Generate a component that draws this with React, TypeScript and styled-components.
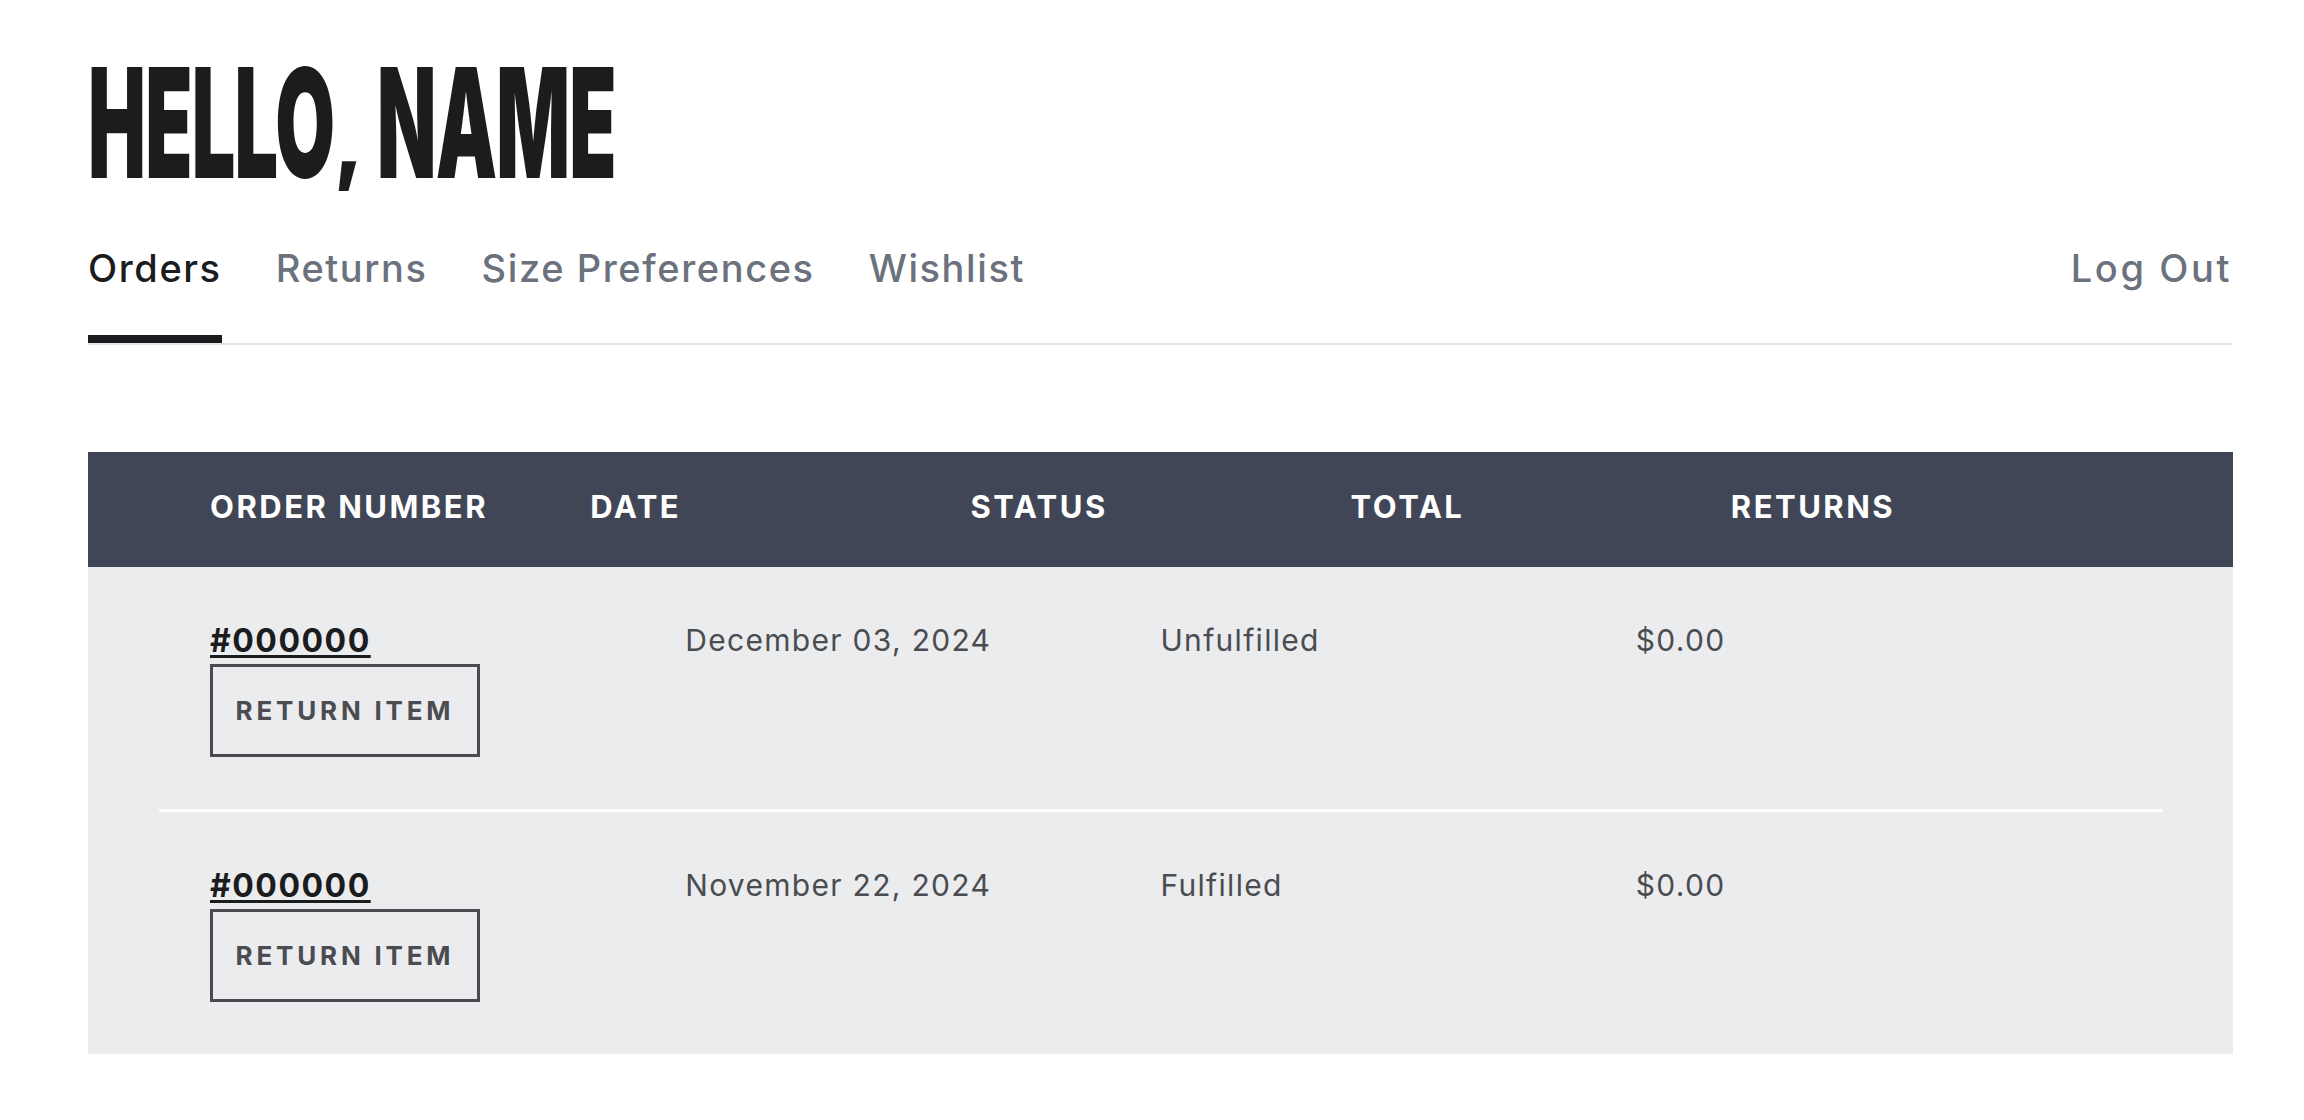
import React from "react";
import styled, { createGlobalStyle } from "styled-components";

const GlobalStyle = createGlobalStyle`
  html, body {
    margin: 0;
    padding: 0;
    background: #ffffff;
  }
  body {
    font-family: "Inter", "Noto Sans", sans-serif;
    color: #1b1c1e;
  }
`;

const Page = styled.div`
  width: 2145px;
  padding-left: 88px;
`;

const Title = styled.h1`
  margin: 0;
  padding-top: 47px;
  font-family: "Inter", "Roboto", sans-serif;
  font-weight: 900;
  font-size: 152px;
  line-height: 152px;
  height: 152px;
  letter-spacing: -0.01em;
  white-space: nowrap;
  color: #1b1c1e;
  transform: scaleX(0.508);
  transform-origin: left center;
`;

// the display face has a short comma, squash ours a bit
const Comma = styled.span`
  display: inline-block;
  transform: scaleY(0.6);
  transform-origin: 50% 76%;
`;

const TabBar = styled.nav`
  display: flex;
  align-items: flex-end;
  gap: 54px;
  margin-top: 47px;
  border-bottom: 2px solid #e3e5e8;
`;

const Tab = styled.a<{ $active?: boolean; $end?: boolean }>`
  font-size: 38px;
  line-height: 1.2;
  font-weight: 500;
  letter-spacing: ${(p) => (p.$end ? "2.6px" : "1.6px")};
  color: ${(p) => (p.$active ? "#1b1c1e" : "#6b727d")};
  padding-bottom: 43px;
  border-bottom: 8px solid ${(p) => (p.$active ? "#1b1c1e" : "transparent")};
  margin-left: ${(p) => (p.$end ? "auto" : "0")};
  padding-right: ${(p) => (p.$end ? "1px" : "0")};
  text-decoration: none;
  cursor: pointer;
`;

const Table = styled.section`
  margin-top: 107px;
  background: #ebecee;
`;

const HeadRow = styled.div`
  display: grid;
  grid-template-columns: repeat(5, 1fr);
  align-items: center;
  height: 115px;
  box-sizing: border-box;
  padding: 0 122px 6px;
  background: #404656;
`;

const HeadCell = styled.div`
  color: #ffffff;
  font-size: 31px;
  font-weight: 700;
  letter-spacing: 2.5px;
  text-transform: uppercase;
`;

const Row = styled.div`
  display: grid;
  grid-template-columns: repeat(4, 1fr);
  align-items: start;
  padding: 55px 122px 52px;
`;

const Divider = styled.hr`
  margin: 0 71px;
  border: 0;
  height: 3px;
  background: #ffffff;
`;

const OrderCell = styled.div`
  display: flex;
  flex-direction: column;
  align-items: flex-start;
`;

const OrderLink = styled.a`
  font-size: 32px;
  line-height: 1.2;
  font-weight: 700;
  letter-spacing: 1.5px;
  color: #1b1c1e;
  text-decoration: underline;
  text-decoration-thickness: 3px;
  text-underline-offset: 3px;
`;

const ReturnButton = styled.button`
  margin-top: 4px;
  width: 270px;
  height: 93px;
  border: 3px solid #4a4b4f;
  background: transparent;
  font-family: "Inter", "Noto Sans", sans-serif;
  font-size: 26px;
  font-weight: 700;
  letter-spacing: 3.8px;
  color: #4a4c50;
  cursor: pointer;
`;

const Cell = styled.div`
  font-size: 30px;
  line-height: 1.2;
  letter-spacing: 1.3px;
  color: #4a4c50;
`;

const orders = [
  { id: "#000000", date: "December 03, 2024", status: "Unfulfilled", total: "$0.00" },
  { id: "#000000", date: "November 22, 2024", status: "Fulfilled", total: "$0.00" },
];

export default function App() {
  return (
    <>
      <GlobalStyle />
      <Page>
        <Title>
          HELLO<Comma>,</Comma> NAME
        </Title>
        <TabBar>
          <Tab $active>Orders</Tab>
          <Tab>Returns</Tab>
          <Tab>Size Preferences</Tab>
          <Tab>Wishlist</Tab>
          <Tab $end>Log Out</Tab>
        </TabBar>
        <Table>
          <HeadRow>
            <HeadCell>Order Number</HeadCell>
            <HeadCell>Date</HeadCell>
            <HeadCell>Status</HeadCell>
            <HeadCell>Total</HeadCell>
            <HeadCell>Returns</HeadCell>
          </HeadRow>
          {orders.map((o, i) => (
            <React.Fragment key={i}>
              {i > 0 && <Divider />}
              <Row>
                <OrderCell>
                  <OrderLink href="#">{o.id}</OrderLink>
                  <ReturnButton>RETURN ITEM</ReturnButton>
                </OrderCell>
                <Cell>{o.date}</Cell>
                <Cell>{o.status}</Cell>
                <Cell>{o.total}</Cell>
              </Row>
            </React.Fragment>
          ))}
        </Table>
      </Page>
    </>
  );
}
